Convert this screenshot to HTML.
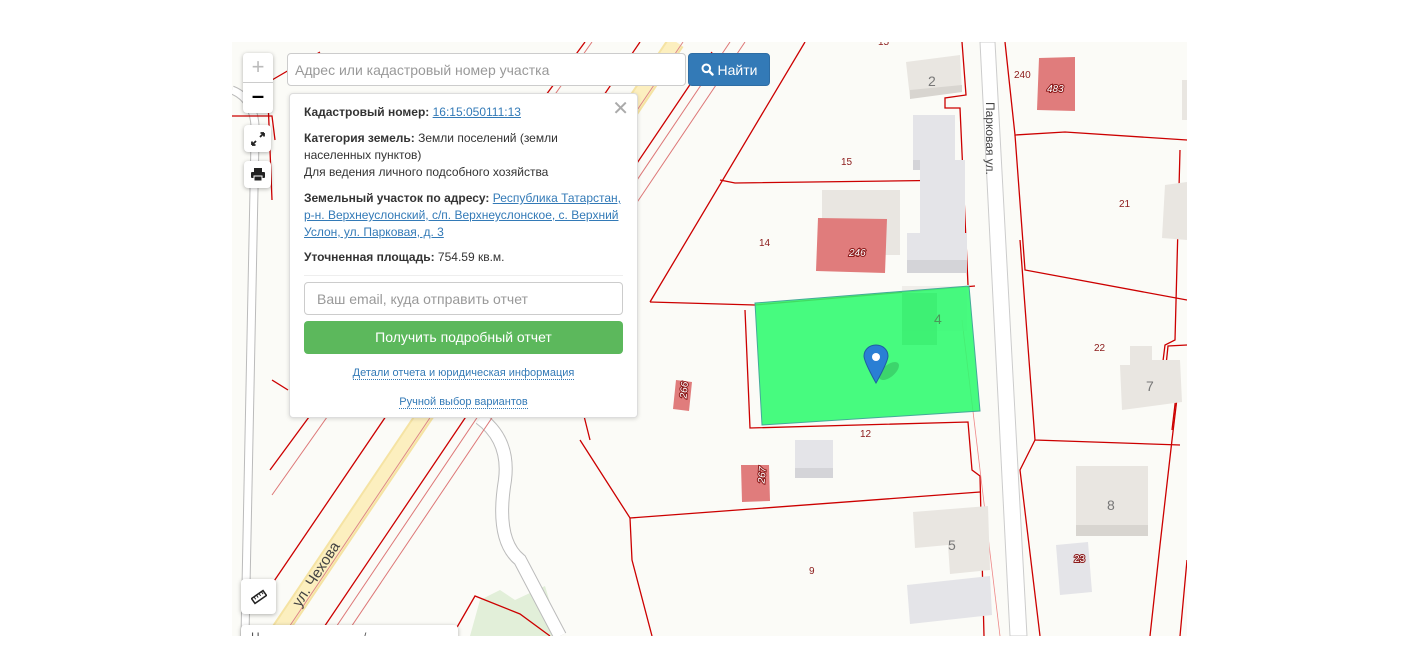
<!DOCTYPE html>
<html><head><meta charset="utf-8"><style>
*{box-sizing:border-box;margin:0;padding:0}
body{width:1416px;height:672px;background:#fff;position:relative;overflow:hidden;font-family:"Liberation Sans",Arial,sans-serif;}
#map{position:absolute;left:232px;top:42px;width:955px;height:594px;overflow:hidden;background:#fbfbf7}
.ctl{position:absolute;background:#fff;border-radius:4px;box-shadow:0 1px 4px rgba(0,0,0,.3);display:flex;align-items:center;justify-content:center}
.pop{position:absolute;left:289px;top:93px;width:349px;height:325px;background:#fff;border:1px solid #ddd;border-radius:4px;box-shadow:0 1px 4px rgba(0,0,0,.15);font-size:12px;color:#333;padding:0 14px}
.pop p{line-height:17px}
.pop b{font-weight:bold}
.pop a{color:#337ab7;text-decoration:underline}
.dl{color:#337ab7;font-size:11px;text-align:center;position:absolute;left:0;width:100%}
.dl span{border-bottom:1px dotted #337ab7}
.rl{paint-order:stroke;stroke:#8b1a1a;stroke-width:2px;fill:#fff;font-style:italic;font-size:10px}
</style></head><body>
<div id="map">
<svg width="955" height="594" viewBox="232 42 955 594" xmlns="http://www.w3.org/2000/svg" font-family="Liberation Sans, Arial, sans-serif">
<polygon points="470,636 480,600 500,590 515,600 545,586 560,636" fill="#e2efd9"/>
<polyline points="452,636 475,596 520,614 550,636" fill="none" stroke="#c00" stroke-width="1.3"/>
<path d="M480,418 Q510,440 505,480 Q495,540 520,560 L560,636" fill="none" stroke="#bbb" stroke-width="14"/>
<path d="M480,418 Q510,440 505,480 Q495,540 520,560 L560,636" fill="none" stroke="#fff" stroke-width="12"/>
<path d="M232,90 Q258,100 255,140 L245,636" fill="none" stroke="#bbb" stroke-width="9"/>
<path d="M232,90 Q258,100 255,140 L245,636" fill="none" stroke="#fff" stroke-width="7"/>
<line x1="276" y1="636" x2="676" y2="42" stroke="#f5e3a3" stroke-width="18"/>
<line x1="276" y1="636" x2="676" y2="42" stroke="#fcefbf" stroke-width="14"/>
<line x1="283" y1="636" x2="683" y2="42" stroke="#d88" stroke-width="1"/>
<g stroke="#c00" stroke-width="1.3" fill="none">
<line x1="268" y1="590" x2="640" y2="42"/>
<line x1="318" y1="636" x2="712" y2="52"/>
<line x1="270" y1="470" x2="585" y2="42"/>
<line x1="650" y1="302" x2="805" y2="42"/>
</g>
<g stroke="#d77" stroke-width="1" fill="none">
<line x1="330" y1="636" x2="730" y2="42"/>
<line x1="345" y1="636" x2="745" y2="42"/>
<line x1="272" y1="495" x2="592" y2="42"/>
</g>
<polygon points="980,42 995,42 1027,636 1010,636" fill="#fff" stroke="#ccc" stroke-width="1"/>
<text x="986" y="102" font-size="12" fill="#444" transform="rotate(90 986 102)">Парковая ул.</text>
<g stroke="#c00" stroke-width="1.3" fill="none">
<polyline points="962,42 966,95 945,98 945,108 960,108 968,285"/>
<polyline points="720,180 735,183 965,180"/>
<polyline points="650,302 755,305 975,286"/>
<polyline points="745,310 750,428 968,422 972,470 980,476 984,636"/>
<polyline points="580,440 630,518 980,492"/>
<polyline points="630,518 632,560 652,636"/>
<polyline points="1005,42 1015,135 1065,132 1187,140"/>
<polyline points="1015,135 1025,270 1187,300"/>
<polyline points="1020,240 1035,440 1180,445"/>
<polyline points="1035,440 1020,470 1040,636"/>
<polyline points="1180,150 1175,340 1165,345 1160,385 1178,390 1172,440 1160,545 1150,636"/>
<polyline points="1187,345 1168,346 1165,375 1178,379 1172,430"/>
<polyline points="1187,560 1180,636"/>
<polyline points="232,116 272,116 275,140"/>
<polyline points="320,52 272,80 268,100 272,200"/>
<polyline points="272,380 288,390"/>
<polyline points="580,400 590,440"/>
</g>
<line x1="962" y1="320" x2="1000" y2="636" stroke="#e88" stroke-width="0.8"/>
<g>
<polygon points="906,62 960,55 962,92 910,98" fill="#e9e6e1"/><polygon points="910,90 962,85 962,92 910,99" fill="#d8d5d0"/>
<rect x="913" y="115" width="42" height="55" fill="#e4e4e8"/><rect x="913" y="160" width="42" height="10" fill="#d4d4d8"/>
<rect x="920" y="160" width="45" height="75" fill="#e4e4e8"/>
<rect x="907" y="233" width="60" height="40" fill="#e4e4e8"/><rect x="907" y="260" width="60" height="13" fill="#d4d4d8"/>
<rect x="822" y="190" width="78" height="65" fill="#e9e6e1"/>
<rect x="902" y="286" width="65" height="45" fill="#e9e6e1" opacity=".6"/>
<rect x="795" y="440" width="38" height="38" fill="#e4e4e8"/><rect x="795" y="468" width="38" height="10" fill="#d4d4d8"/>
<polygon points="913,512 988,506 990,570 950,574 948,545 915,548" fill="#e9e6e1"/>
<polygon points="907,585 990,576 992,615 910,624" fill="#e4e4e8"/>
<rect x="1076" y="466" width="72" height="70" fill="#e9e6e1"/><rect x="1076" y="525" width="72" height="11" fill="#d8d5d0"/>
<polygon points="1056,545 1088,542 1092,592 1060,595" fill="#e4e4e8"/>
<polygon points="1130,346 1152,346 1152,360 1180,360 1182,402 1122,410 1120,365 1130,365" fill="#e9e6e1"/>
<polygon points="1165,185 1187,182 1187,240 1162,238" fill="#e9e6e1"/>
<polygon points="1182,80 1187,80 1187,120 1182,120" fill="#e9e6e1"/>
</g>
<polygon points="818,218 887,219 885,273 816,271" fill="#e07c7c"/>
<polygon points="1039,58 1075,57 1075,111 1037,110" fill="#e07c7c"/>
<polygon points="676,380 692,382 689,411 673,409" fill="#e07c7c"/>
<polygon points="741,465 769,465 770,501 742,502" fill="#e07c7c"/>
<polygon points="755,303 969,286 980,411 762,425" fill="#2dfb6e" fill-opacity=".88" stroke="#4a9" stroke-width="1"/>
<rect x="902" y="293" width="35" height="52" fill="#35e86a" opacity=".5"/>
<g font-size="10" fill="#8b1a1a">
<text x="878" y="45">15</text><text x="841" y="165">15</text><text x="759" y="246">14</text>
<text x="860" y="437">12</text><text x="809" y="574">9</text><text x="1119" y="207">21</text>
<text x="1094" y="351">22</text><text x="1014" y="78">240</text>
</g>
<text class="rl" x="849" y="256">246</text><text class="rl" x="1047" y="92">483</text>
<text class="rl" x="688" y="382" transform="rotate(-85 688 382)" text-anchor="end">266</text>
<text class="rl" x="766" y="467" transform="rotate(-85 766 467)" text-anchor="end">267</text>
<text class="rl" x="1074" y="562" style="font-style:normal">23</text>
<g font-size="14" fill="#777"><text x="928" y="86">2</text><text x="934" y="324" fill="#4a9a5a">4</text><text x="1146" y="391">7</text><text x="1107" y="510">8</text><text x="948" y="550">5</text></g>
<text x="300" y="608" font-size="15" fill="#444" transform="rotate(-57 300 608)">ул. Чехова</text>
<ellipse cx="889" cy="371" rx="12" ry="6" fill="#000" opacity=".15" transform="rotate(-40 889 371)"/>
<path d="M876,345 c-7,0 -12,5 -12,11 c0,6 12,27 12,27 c0,0 12,-21 12,-27 c0,-6 -5,-11 -12,-11z" fill="#2a7fd4" stroke="#1e5fa0" stroke-width="1"/>
<circle cx="876" cy="357" r="4" fill="#fff"/>
</svg>
</div>
<div class="ctl" style="left:243px;top:53px;width:30px;height:60px;flex-direction:column;">
<div style="height:30px;width:30px;border-bottom:1px solid #ccc;color:#bbb;font-size:22px;text-align:center;line-height:28px">+</div>
<div style="height:30px;width:30px;font-size:22px;text-align:center;line-height:26px;color:#000;font-weight:bold">–</div>
</div>
<div class="ctl" style="left:244px;top:125px;width:27px;height:27px;"><svg width="14" height="14" viewBox="0 0 14 14"><path d="M1,13 L5,9 M1,13 V9.5 M1,13 H4.5 M13,1 L9,5 M13,1 V4.5 M13,1 H9.5" stroke="#222" stroke-width="1.8" fill="none"/></svg></div>
<div class="ctl" style="left:244px;top:161px;width:27px;height:27px;"><svg width="14" height="13" viewBox="0 0 14 13"><rect x="3" y="0" width="8" height="4" fill="#222"/><rect x="0" y="4" width="14" height="6" rx="1" fill="#222"/><rect x="3" y="8" width="8" height="5" fill="#222" stroke="#fff" stroke-width="1"/></svg></div>
<div class="ctl" style="left:241px;top:579px;width:35px;height:35px;"><svg width="16" height="16" viewBox="0 0 16 16"><g transform="rotate(-35 8 8)"><rect x="1" y="5" width="14" height="6" fill="none" stroke="#222" stroke-width="1.5"/><path d="M4,5v3M7,5v3M10,5v3M13,5v3" stroke="#222" stroke-width="1"/></g></svg></div>
<div class="ctl" style="left:241px;top:625px;width:217px;height:30px;align-items:flex-start;justify-content:flex-start;padding:5px 10px;font-size:12px;color:#555">Н &nbsp; &nbsp; &nbsp; &nbsp; &nbsp; &nbsp; &nbsp; &nbsp; &nbsp; &nbsp; &nbsp; &nbsp; &nbsp; &nbsp; &nbsp; /</div>
<div style="position:absolute;left:232px;top:636px;width:955px;height:36px;background:#fff"></div>
<div style="position:absolute;left:287px;top:53px;width:399px;height:33px;background:#fff;border:1px solid #ccc;border-radius:4px;font-size:14px;color:#999;padding:8px 7px">Адрес или кадастровый номер участка</div>
<div style="position:absolute;left:688px;top:53px;width:82px;height:33px;background:#337ab7;border:1px solid #2e6da4;border-radius:4px;color:#fff;font-size:14px;display:flex;align-items:center;justify-content:center;gap:4px">
<svg width="13" height="13" viewBox="0 0 13 13"><circle cx="5.3" cy="5.3" r="3.8" stroke="#fff" stroke-width="2" fill="none"/><line x1="8" y1="8" x2="11.5" y2="11.5" stroke="#fff" stroke-width="2.4" stroke-linecap="round"/></svg>Найти</div>
<div class="pop">
<div style="position:absolute;right:8px;top:2px;font-size:20px;color:#aaa">✕</div>
<p style="margin-top:10px"><b>Кадастровый номер:</b> <a>16:15:050111:13</a></p>
<p style="margin-top:9px"><b>Категория земель:</b> Земли поселений (земли населенных пунктов)<br>Для ведения личного подсобного хозяйства</p>
<p style="margin-top:9px"><b>Земельный участок по адресу:</b> <a>Республика Татарстан, р-н. Верхнеуслонский, с/п. Верхнеуслонское, с. Верхний Услон, ул. Парковая, д. 3</a></p>
<p style="margin-top:8px"><b>Уточненная площадь:</b> 754.59 кв.м.</p>
<div style="border-top:1px solid #eee;margin-top:9px"></div>
<div style="margin-top:6px;height:33px;border:1px solid #ccc;border-radius:4px;font-size:14px;color:#999;padding:8px 12px">Ваш email, куда отправить отчет</div>
<div style="margin-top:6px;height:33px;background:#5cb85c;border-radius:4px;color:#fff;font-size:14px;text-align:center;line-height:33px">Получить подробный отчет</div>
<div class="dl" style="top:273px"><span>Детали отчета и юридическая информация</span></div>
<div class="dl" style="top:302px"><span>Ручной выбор вариантов</span></div>
</div>
</body></html>
